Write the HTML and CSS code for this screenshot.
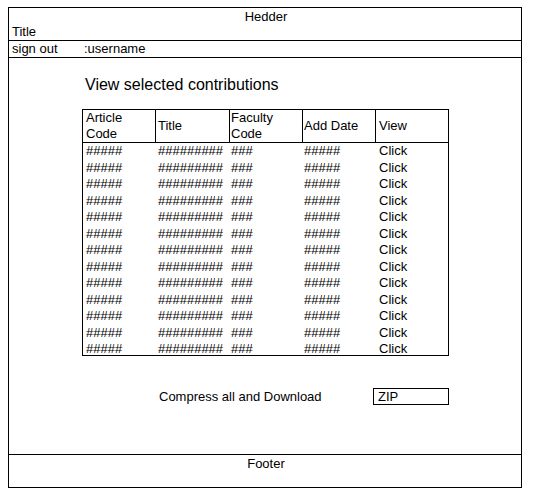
FILE: index.html
```html
<!DOCTYPE html>
<html lang="en">
<head>
<meta charset="utf-8">
<title>View selected contributions</title>
<link rel="stylesheet" href="styles.css">
</head>
<body>
<div class="page">
  <header class="header">
    <div class="header-brand">Hedder</div>
    <div class="header-title">Title</div>
  </header>
  <nav class="userbar">
    <span class="userbar-label">sign out</span>
    <span class="userbar-name">:username</span>
  </nav>
  <main class="main">
    <h1 class="main-title">View selected contributions</h1>
    <div class="grid">
      <div class="grid-head">
        <div class="cell">Article<br>Code</div>
        <div class="cell">Title</div>
        <div class="cell">Faculty<br>Code</div>
        <div class="cell">Add Date</div>
        <div class="cell">View</div>
      </div>
      <div class="grid-body">
        <div class="grid-row"><div class="cell">#####</div><div class="cell">#########</div><div class="cell">###</div><div class="cell">#####</div><div class="cell">Click</div></div>
        <div class="grid-row"><div class="cell">#####</div><div class="cell">#########</div><div class="cell">###</div><div class="cell">#####</div><div class="cell">Click</div></div>
        <div class="grid-row"><div class="cell">#####</div><div class="cell">#########</div><div class="cell">###</div><div class="cell">#####</div><div class="cell">Click</div></div>
        <div class="grid-row"><div class="cell">#####</div><div class="cell">#########</div><div class="cell">###</div><div class="cell">#####</div><div class="cell">Click</div></div>
        <div class="grid-row"><div class="cell">#####</div><div class="cell">#########</div><div class="cell">###</div><div class="cell">#####</div><div class="cell">Click</div></div>
        <div class="grid-row"><div class="cell">#####</div><div class="cell">#########</div><div class="cell">###</div><div class="cell">#####</div><div class="cell">Click</div></div>
        <div class="grid-row"><div class="cell">#####</div><div class="cell">#########</div><div class="cell">###</div><div class="cell">#####</div><div class="cell">Click</div></div>
        <div class="grid-row"><div class="cell">#####</div><div class="cell">#########</div><div class="cell">###</div><div class="cell">#####</div><div class="cell">Click</div></div>
        <div class="grid-row"><div class="cell">#####</div><div class="cell">#########</div><div class="cell">###</div><div class="cell">#####</div><div class="cell">Click</div></div>
        <div class="grid-row"><div class="cell">#####</div><div class="cell">#########</div><div class="cell">###</div><div class="cell">#####</div><div class="cell">Click</div></div>
        <div class="grid-row"><div class="cell">#####</div><div class="cell">#########</div><div class="cell">###</div><div class="cell">#####</div><div class="cell">Click</div></div>
        <div class="grid-row"><div class="cell">#####</div><div class="cell">#########</div><div class="cell">###</div><div class="cell">#####</div><div class="cell">Click</div></div>
        <div class="grid-row"><div class="cell">#####</div><div class="cell">#########</div><div class="cell">###</div><div class="cell">#####</div><div class="cell">Click</div></div>
      </div>
    </div>
    <div class="actions">
      <span class="actions-label">Compress all and Download</span>
      <span class="zip">ZIP</span>
    </div>
  </main>
  <footer class="footer">Footer</footer>
</div>
</body>
</html>
```

FILE: styles.css
```css
html, body {
  margin: 0;
  background: #fff;
}

body {
  font-family: "Liberation Sans", Arial, sans-serif;
  font-size: 13px;
  color: #000;
}

.page {
  margin: 7px 0 0 8px;
  width: 514px;
  height: 481px;
  box-sizing: border-box;
  border: 1px solid #000;
  display: flex;
  flex-direction: column;
}

.header {
  padding: 1px 0;
  line-height: 15px;
  border-bottom: 1px solid #000;
}

.header-brand {
  text-align: center;
  padding-left: 2px;
}

.header-title {
  padding-left: 3px;
}

.userbar {
  display: flex;
  padding-left: 3px;
  line-height: 16px;
  border-bottom: 1px solid #000;
}

.userbar-label {
  width: 72px;
}

.main {
  flex: 1;
  padding: 17px 0 0 73px;
}

.main-title {
  margin: 0;
  padding-left: 3px;
  font-size: 16px;
  line-height: 19px;
  font-weight: normal;
}

.grid {
  margin-top: 15px;
  width: 367px;
  box-sizing: border-box;
  border: 1px solid #000;
}

.grid-head,
.grid-row {
  display: grid;
  grid-template-columns: 72px 74px 73px 73px 73px;
}

.grid-head {
  height: 33px;
  box-sizing: border-box;
  border-bottom: 1px solid #000;
  line-height: 16px;
}

.grid-head .cell {
  display: flex;
  align-items: center;
}

.cell {
  box-sizing: border-box;
  white-space: nowrap;
}

.cell:nth-child(n+2) {
  border-left: 1px solid transparent;
}

.grid-head .cell:nth-child(n+2) {
  border-left-color: #000;
}

.cell:nth-child(1) { padding-left: 3px; }
.cell:nth-child(2) { padding-left: 2px; }
.cell:nth-child(3) { padding-left: 1px; }
.cell:nth-child(4) { padding-left: 1px; }
.cell:nth-child(5) { padding-left: 3px; }

.grid-body {
  height: 212px;
}

.grid-row {
  line-height: 16.5px;
}

.actions {
  display: flex;
  justify-content: space-between;
  align-items: center;
  width: 367px;
  box-sizing: border-box;
  margin-top: 32px;
  padding-left: 77px;
  line-height: 15px;
}

.zip {
  width: 76px;
  box-sizing: border-box;
  border: 1px solid #000;
  padding-left: 4px;
}

.footer {
  height: 33px;
  box-sizing: border-box;
  border-top: 1px solid #000;
  padding: 1px 0 0 2px;
  text-align: center;
  line-height: 16px;
}
```
